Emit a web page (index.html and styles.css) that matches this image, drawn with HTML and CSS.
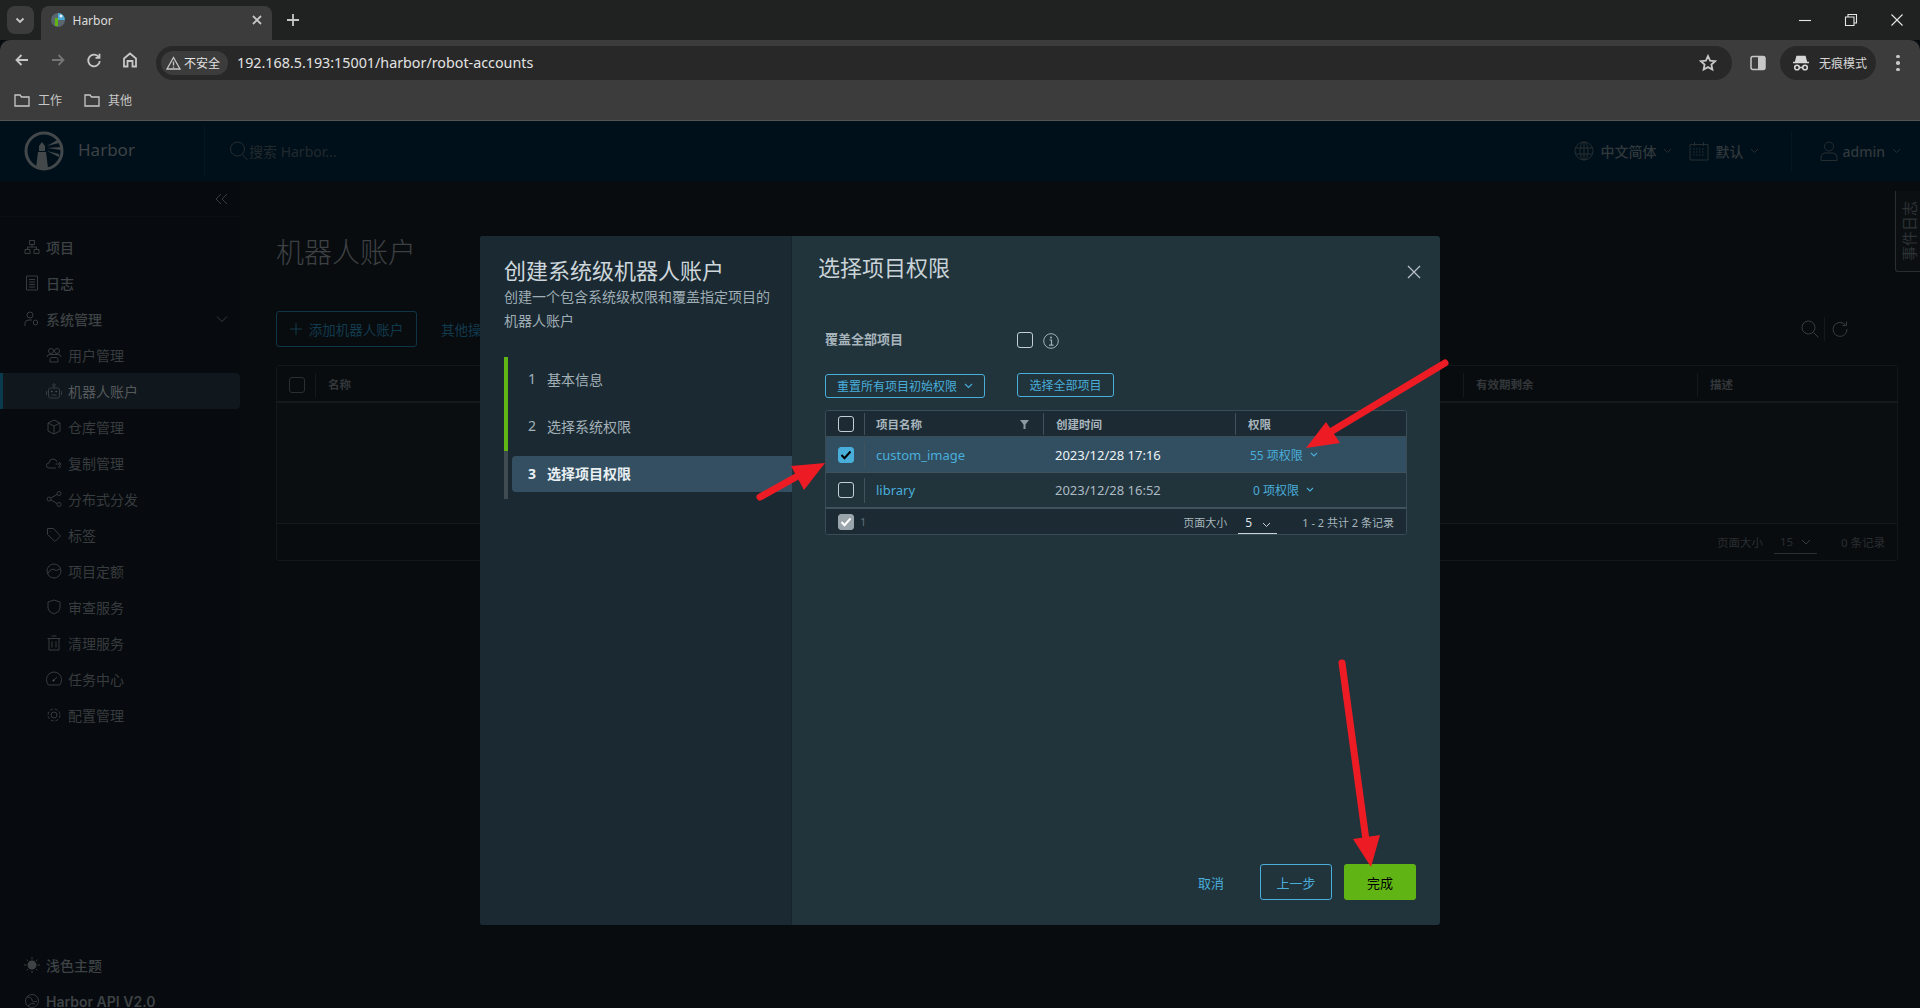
FILE: index.html
```html
<!DOCTYPE html>
<html lang="zh-CN">
<head>
    <meta charset="UTF-8">
    <title>Harbor</title>
    <link rel="stylesheet" href="styles.css">
</head>
<body>
<div class="page">

    <!-- browser chrome -->
    <div class="tabstrip">
        <div class="tab-list"><svg width="12" height="12" viewBox="0 0 12 12"><path d="M2.5 4.5 6 8l3.5-3.5" class="ico-light2"/></svg></div>
        <div class="tab">
            <svg width="16" height="16" viewBox="0 0 16 16"><circle cx="8" cy="8" r="7" fill="#59666d"/><path d="M8 1a7 7 0 0 1 7 7H8z" fill="#4aa9d8"/><rect x="5" y="6" width="3" height="8" fill="#60b515"/><circle cx="11" cy="4" r="1.500" fill="#e8eef2"/></svg>
            <span class="tab-title">Harbor</span>
            <svg class="tab-close" width="12" height="12" viewBox="0 0 12 12"><path d="M2 2l8 8M10 2l-8 8" class="ico-light2"/></svg>
        </div>
        <svg class="tab-new" width="14" height="14" viewBox="0 0 14 14"><path d="M7 1v12M1 7h12" class="ico-light2"/></svg>
        <div class="win-controls">
            <svg width="14" height="14" viewBox="0 0 14 14"><path d="M1 7.500h12" class="ico-thin"/></svg>
            <svg width="14" height="14" viewBox="0 0 14 14"><path d="M1.500 4h8.500v8.500H1.500zM4 4V1.500h8.500V10H10" class="ico-thin"/></svg>
            <svg width="14" height="14" viewBox="0 0 14 14"><path d="M1.500 1.500l11 11M12.500 1.500l-11 11" class="ico-thin"/></svg>
        </div>
    </div>
    <div class="toolbar">
        <div class="nav-btns">
            <svg width="16" height="16" viewBox="0 0 16 16"><path d="M14 8H2.500M7.500 3l-5 5 5 5" class="ico-light2"/></svg>
            <svg width="16" height="16" viewBox="0 0 16 16"><path d="M2 8h11.500M8.500 3l5 5-5 5" class="ico-dim"/></svg>
            <svg width="16" height="16" viewBox="0 0 16 16"><path d="M13 5.500A5.800 5.800 0 1 0 13.800 9M13.500 1.800v4h-4" class="ico-light2"/></svg>
            <svg width="16" height="16" viewBox="0 0 16 16"><path d="M2 14.500V6.500L8 1.500l6 5v8h-3.500V9h-5v5.500z" class="ico-light2"/></svg>
        </div>
        <div class="omnibox">
            <div class="chip">
                <svg width="15" height="14" viewBox="0 0 15 14"><path d="M7.500 1.500 14 13H1zM7.500 5.500v4M7.500 10.500v1.200" class="ico-light"/></svg>
                <span>不安全</span>
            </div>
            <span class="url">192.168.5.193:15001/harbor/robot-accounts</span>
            <svg class="star" width="18" height="18" viewBox="0 0 18 18"><path d="M9 2l2.100 4.600 5 .6-3.700 3.400 1 5L9 13.100l-4.400 2.500 1-5L1.900 7.200l5-.6z" class="ico-light2"/></svg>
        </div>
        <svg class="panel-ico" width="16" height="16" viewBox="0 0 16 16"><rect x="1" y="1.500" width="14" height="13" rx="2" fill="none" stroke="#c7c7c7" stroke-width="1.500"/><rect x="8" y="1.500" width="7" height="13" rx="1" fill="#c7c7c7"/></svg>
        <div class="incognito">
            <svg width="18" height="16" viewBox="0 0 18 16"><path d="M5 1.500h8l1.300 5H3.700zM1 7.500h16" fill="#d6d6d6" stroke="#d6d6d6" stroke-width="1.500"/><circle cx="5" cy="12.500" r="2.300" fill="none" stroke="#d6d6d6" stroke-width="1.600"/><circle cx="13" cy="12.500" r="2.300" fill="none" stroke="#d6d6d6" stroke-width="1.600"/><path d="M7.300 12.500h3.400" stroke="#d6d6d6" stroke-width="1.500"/></svg>
            <span>无痕模式</span>
        </div>
        <div class="menu-dots"><i></i><i></i><i></i></div>
    </div>
    <div class="bookmarks">
        <div class="bookmark"><svg width="16" height="14" viewBox="0 0 16 14"><path d="M1 2h5l1.500 2H15v9H1z" class="ico-light"/></svg><span>工作</span></div>
        <div class="bookmark"><svg width="16" height="14" viewBox="0 0 16 14"><path d="M1 2h5l1.500 2H15v9H1z" class="ico-light"/></svg><span>其他</span></div>
    </div>

    <!-- harbor header, dimmed by the modal backdrop -->
    <header class="app-header">
        <div class="brand">
            <svg width="40" height="40" viewBox="0 0 40 40"><circle cx="20" cy="20" r="18" fill="none" stroke="#43484b" stroke-width="3"/><path d="M15 15l3-4 3 4v5h-6zM14 21h8l2 16h-12z" fill="#43484b"/><path d="M23 15l12-7v4zM23 17l14-1v3zM23 20l12 3v3z" fill="#43484b"/></svg>
            <span class="brand-name">Harbor</span>
        </div>
        <div class="header-search">
            <svg width="20" height="22" viewBox="0 0 20 22"><circle cx="8.500" cy="9" r="7" class="ico-h"/><path d="M13.500 14.500l5 5.500" class="ico-h"/></svg>
            <span>搜索 Harbor...</span>
        </div>
        <div class="header-right">
            <svg width="20" height="20" viewBox="0 0 20 20"><circle cx="10" cy="10" r="9" class="ico-h"/><ellipse cx="10" cy="10" rx="4" ry="9" class="ico-h"/><path d="M1 7h18M1 13h18M10 1v18" class="ico-h"/></svg>
            <span class="h-label lang">中文简体</span>
            <svg class="h-chev" width="9" height="6" viewBox="0 0 9 6"><path d="M1 1l3.500 3.500L8 1" class="ico-h"/></svg>
            <svg class="h-cal" width="20" height="20" viewBox="0 0 20 20"><path d="M1 3.500h18v15.500H1zM5.500 1v4M14.500 1v4" class="ico-h"/><path d="M4 8h12M4 11h12M4 14h12" class="ico-h" stroke-dasharray="1.500 1.500"/></svg>
            <span class="h-label">默认</span>
            <svg class="h-chev" width="9" height="6" viewBox="0 0 9 6"><path d="M1 1l3.500 3.500L8 1" class="ico-h"/></svg>
            <div class="h-divider"></div>
            <svg class="h-user" width="18" height="20" viewBox="0 0 18 20"><circle cx="9" cy="5.500" r="4.500" class="ico-h"/><path d="M1 19.500v-3.500q0-3.500 4-4h8q4 .5 4 4v3.500z" class="ico-h"/></svg>
            <span class="h-label">admin</span>
            <svg class="h-chev" width="9" height="6" viewBox="0 0 9 6"><path d="M1 1l3.500 3.500L8 1" class="ico-h"/></svg>
        </div>
    </header>

    <div class="app-body">
        <nav class="sidebar">
            <div class="collapse"><svg width="13" height="12" viewBox="0 0 13 12"><path d="M6 1L1 6l5 5M12 1L7 6l5 5" class="ico-s"/></svg></div>
            <div class="nav-list">
                <a class="nav-top"><svg width="16" height="16" viewBox="0 0 16 16"><path d="M5.500 1.500h5v4h-5zM1 10.500h5v4H1zM10 10.500h5v4h-5zM8 5.500v2.500M3.500 10.500V8h9v2.500" class="ico-s"/></svg>项目</a>
                <a class="nav-top"><svg width="16" height="16" viewBox="0 0 16 16"><path d="M2.500 1h11v14h-11zM5 4.500h6M5 7h6M5 9.500h6M5 12h6" class="ico-s"/></svg>日志</a>
                <a class="nav-top"><svg width="16" height="16" viewBox="0 0 16 16"><circle cx="6" cy="4" r="3" class="ico-s"/><path d="M1 15v-3q0-3 4-3h3M11.500 9l2 1v3l-2 1-2-1v-3z" class="ico-s"/></svg>系统管理<svg class="nav-chev" width="12" height="8" viewBox="0 0 12 8"><path d="M1 1.500l5 5 5-5" class="ico-s"/></svg></a>
                <a class="nav-sub"><svg width="16" height="16" viewBox="0 0 16 16"><circle cx="5" cy="4" r="2.500" class="ico-s"/><circle cx="11" cy="4" r="2.500" class="ico-s"/><path d="M1 10q0-2.500 3-2.500h8q3 0 3 2.500M4 15v-2.500q0-2 2-2h4q2 0 2 2V15z" class="ico-s"/></svg>用户管理</a>
                <a class="nav-sub active"><svg width="16" height="16" viewBox="0 0 16 16"><rect x="2.500" y="5" width="11" height="10" rx="2" class="ico-s"/><circle cx="8" cy="2" r="1.200" class="ico-s"/><path d="M8 3v2M5.500 12h5M0.500 8v4M15.500 8v4" class="ico-s"/><circle cx="5.800" cy="8.500" r=".8" fill="#55595c"/><circle cx="10.200" cy="8.500" r=".8" fill="#55595c"/></svg>机器人账户</a>
                <a class="nav-sub"><svg width="16" height="16" viewBox="0 0 16 16"><path d="M8 1l6 3v8l-6 3-6-3V4zM2 4l6 3 6-3M8 7v8" class="ico-s"/></svg>仓库管理</a>
                <a class="nav-sub"><svg width="16" height="16" viewBox="0 0 16 16"><path d="M10 13H3q-2.500 0-2.500-2.500Q.5 8 3 8q.5-4 4-4 3 0 4 3M9.500 9H15M13 7l2 2-2 2M15 12h-3" class="ico-s"/></svg>复制管理</a>
                <a class="nav-sub"><svg width="16" height="16" viewBox="0 0 16 16"><circle cx="3" cy="8" r="2" class="ico-s"/><circle cx="13" cy="2.500" r="2" class="ico-s"/><circle cx="13" cy="13.500" r="2" class="ico-s"/><path d="M5 7l6-3.500M5 9l6 3.500" class="ico-s"/></svg>分布式分发</a>
                <a class="nav-sub"><svg width="16" height="16" viewBox="0 0 16 16"><path d="M1.500 1.500h6l7 7.500-5.500 5.500-7.500-7zM4.500 4.500h.5" class="ico-s"/></svg>标签</a>
                <a class="nav-sub"><svg width="16" height="16" viewBox="0 0 16 16"><circle cx="8" cy="8" r="7" class="ico-s"/><path d="M1.500 11Q4 5.500 8 6q1 3 6.500-.5" class="ico-s"/></svg>项目定额</a>
                <a class="nav-sub"><svg width="16" height="16" viewBox="0 0 16 16"><path d="M8 1l6 2v6q0 4-6 6-6-2-6-6V3z" class="ico-s"/></svg>审查服务</a>
                <a class="nav-sub"><svg width="16" height="16" viewBox="0 0 16 16"><path d="M1.500 3.500h13M3 3.500V15h10V3.500M5.500 1h5M6 6.500v6M10 6.500v6" class="ico-s"/></svg>清理服务</a>
                <a class="nav-sub"><svg width="16" height="16" viewBox="0 0 16 16"><path d="M2.500 14Q.5 12 .5 8.500a7.500 7.500 0 0 1 15 0q0 3.500-2 5.500zM8 9l3-3" class="ico-s"/><circle cx="7.500" cy="9.500" r="1" fill="#55595c"/></svg>任务中心</a>
                <a class="nav-sub"><svg width="16" height="16" viewBox="0 0 16 16"><circle cx="8" cy="8" r="3" class="ico-s"/><circle cx="8" cy="8" r="6" class="ico-s" stroke-dasharray="3 1.700"/></svg>配置管理</a>
            </div>
            <div class="nav-bottom">
                <a class="nav-top"><svg width="16" height="16" viewBox="0 0 16 16"><circle cx="8" cy="8" r="4.500" fill="#3d4245"/><path d="M8 0v2.500M8 13.500V16M0 8h2.500M13.500 8H16M2.500 2.500l1.500 1.500M12 12l1.500 1.500M13.500 2.500L12 4M4 12l-1.500 1.500" class="ico-s"/></svg>浅色主题</a>
                <a class="nav-top api"><svg width="16" height="16" viewBox="0 0 16 16"><circle cx="8" cy="8" r="6.500" class="ico-s"/><path d="M3 4q5 0 5 3t5 1M4 13q3-4 7-2" class="ico-s"/></svg>Harbor API V2.0</a>
            </div>
        </nav>

        <main class="content">
            <h1 class="page-title">机器人账户</h1>
            <div class="page-actions">
                <button class="add-btn"><svg width="12" height="12" viewBox="0 0 12 12"><path d="M6 0v12M0 6h12" stroke="#123a4d" stroke-width="1" fill="none"/></svg>添加机器人账户</button>
                <span class="more-btn">其他操作</span>
                <div class="page-tools">
                    <svg width="18" height="18" viewBox="0 0 18 18"><circle cx="7.500" cy="7.500" r="6.500" class="ico-s"/><path d="M12.500 12.500l5 5" class="ico-s"/></svg>
                    <div class="tool-line"></div>
                    <svg width="16" height="16" viewBox="0 0 16 16"><path d="M13 3.500A7 7 0 1 0 15 8M14.500 .5v4h-4" class="ico-s"/></svg>
                </div>
            </div>
            <div class="bg-table">
                <div class="bg-head">
                    <span class="bg-check"></span>
                    <span class="bg-col first">名称</span>
                    <span class="bg-col expiry">有效期剩余</span>
                    <span class="bg-col desc">描述</span>
                </div>
                <div class="bg-rows"></div>
                <div class="bg-foot">
                    <span>页面大小</span>
                    <span class="bg-size">15<svg width="10" height="6" viewBox="0 0 10 6"><path d="M1 1l4 4 4-4" class="ico-s"/></svg></span>
                    <span>0 条记录</span>
                </div>
            </div>
        </main>
    </div>

    <div class="events-tab"><span>事件日志</span></div>

    <!-- modal -->
    <section class="modal">
        <aside class="wizard">
            <h2>创建系统级机器人账户</h2>
            <p>创建一个包含系统级权限和覆盖指定项目的机器人账户</p>
            <ul class="steps">
                <li class="done"><b>1</b>基本信息</li>
                <li class="done"><b>2</b>选择系统权限</li>
                <li class="current"><b>3</b>选择项目权限</li>
            </ul>
        </aside>
        <div class="pane">
            <div class="pane-head">
                <h3>选择项目权限</h3>
                <svg width="14" height="14" viewBox="0 0 14 14"><path d="M1 1l12 12M13 1L1 13" stroke="#b4c0c6" stroke-width="1.300" fill="none"/></svg>
            </div>
            <div class="pane-body">
                <div class="cover-row">
                    <label>覆盖全部项目</label>
                    <span class="check"></span>
                    <svg class="info" width="16" height="16" viewBox="0 0 16 16"><circle cx="8" cy="8" r="7.300" fill="none" stroke="#9fb0b9" stroke-width="1"/><path d="M6.500 7h2v5M6 12.200h4.500" fill="none" stroke="#9fb0b9" stroke-width="1.200"/><circle cx="8" cy="4.500" r="1" fill="#9fb0b9"/></svg>
                </div>
                <div class="action-row">
                    <button class="btn-outline reset">重置所有项目初始权限<svg width="9" height="6" viewBox="0 0 9 6"><path d="M1 1l3.500 3.500L8 1" class="ico-b"/></svg></button>
                    <button class="btn-outline all">选择全部项目</button>
                </div>
                <div class="grid">
                    <div class="row head">
                        <div class="c-check"><span class="check"></span></div>
                        <div class="c-name">项目名称<svg width="9" height="9" viewBox="0 0 9 9"><path d="M0 0h9L5.500 4.500V9h-2V4.500z" fill="#8a9aa3"/></svg></div>
                        <div class="c-date">创建时间</div>
                        <div class="c-perm">权限</div>
                    </div>
                    <div class="row selected">
                        <div class="c-check"><span class="check on"><svg width="12" height="10" viewBox="0 0 12 10"><path d="M1.500 5l3 3.200L10.500 1.500" fill="none" stroke="#000" stroke-width="2"/></svg></span></div>
                        <div class="c-name link">custom_image</div>
                        <div class="c-date">2023/12/28 17:16</div>
                        <div class="c-perm link">55 项权限<svg width="8" height="6" viewBox="0 0 8 6"><path d="M1 1l3 3 3-3" class="ico-b"/></svg></div>
                    </div>
                    <div class="row plain">
                        <div class="c-check"><span class="check"></span></div>
                        <div class="c-name link">library</div>
                        <div class="c-date">2023/12/28 16:52</div>
                        <div class="c-perm link zero">0 项权限<svg width="8" height="6" viewBox="0 0 8 6"><path d="M1 1l3 3 3-3" class="ico-b"/></svg></div>
                    </div>
                    <div class="grid-foot">
                        <span class="check gray"><svg width="12" height="10" viewBox="0 0 12 10"><path d="M1.500 5l3 3.200L10.500 1.500" fill="none" stroke="#fff" stroke-width="2"/></svg></span>
                        <span class="count">1</span>
                        <span class="psize-label">页面大小</span>
                        <span class="psize">5<svg width="9" height="6" viewBox="0 0 9 6"><path d="M1 1l3.500 3.500L8 1" fill="none" stroke="#c8d2d8" stroke-width="1"/></svg></span>
                        <span class="total">1 - 2 共计 2 条记录</span>
                    </div>
                </div>
            </div>
            <div class="pane-foot">
                <span class="cancel">取消</span>
                <button class="btn-outline prev">上一步</button>
                <button class="btn-finish">完成</button>
            </div>
        </div>
    </section>

    <!-- red annotation arrows -->
    <svg class="arrows" width="1920" height="1008" viewBox="0 0 1920 1008">
        <path d="M1445 363 1322 437" stroke="#ed1c24" stroke-width="7" stroke-linecap="round"/>
        <path d="M1306 448 1326 422 1340 443z" fill="#ed1c24"/>
        <path d="M760 497 796 477" stroke="#ed1c24" stroke-width="7" stroke-linecap="round"/>
        <path d="M825 463 791 466 804 490z" fill="#ed1c24"/>
        <path d="M1342 663 1366 840" stroke="#ed1c24" stroke-width="7" stroke-linecap="round"/>
        <path d="M1371 867 1353 839 1380 835z" fill="#ed1c24"/>
    </svg>
</div>
</body>
</html>
```

FILE: styles.css
```css
* {
    box-sizing: border-box;
}

html, body {
    margin: 0;
    height: 100%;
    overflow: hidden;
    background: #080c0f;
}

body {
    font-family: "Noto Sans", "Noto Sans CJK SC", sans-serif;
    font-size: 14px;
}

svg {
    display: block;
    flex: none;
}

h1, h2, h3, p, ul {
    margin: 0;
    padding: 0;
    font-weight: 400;
}

button {
    font-family: inherit;
    background: none;
    padding: 0;
}

.page {
    position: relative;
    width: 1920px;
    height: 1008px;
    overflow: hidden;
    display: flex;
    flex-direction: column;
}

/* icon strokes */
.ico-light, .ico-light2, .ico-thin, .ico-dim, .ico-h, .ico-s, .ico-b {
    fill: none;
}
.ico-light { stroke: #c7c7c7; stroke-width: 1.300; }
.ico-light2 { stroke: #c7c7c7; stroke-width: 1.800; }
.ico-thin { stroke: #e6e6e6; stroke-width: 1.100; }
.ico-dim { stroke: #757575; stroke-width: 1.800; }
.ico-h { stroke: #262d31; stroke-width: 1; }
.ico-s { stroke: #373c3f; stroke-width: 1; }
.ico-b { stroke: #49aeda; stroke-width: 1.100; }

/* browser chrome */
.tabstrip {
    height: 40px;
    background: #202221;
    display: flex;
    align-items: flex-start;
    position: relative;
}

.tab-list {
    width: 27px;
    height: 28px;
    margin: 6px 0 0 6.500px;
    background: #3c3c3c;
    border-radius: 8px;
    display: flex;
    align-items: center;
    justify-content: center;
}

.tab {
    width: 231px;
    height: 34px;
    margin: 6px 0 0 7px;
    padding: 0 9px 6px;
    background: #3c3c3c;
    border-radius: 8px 8px 0 0;
    display: flex;
    align-items: center;
    color: #dcdcdc;
    font-size: 12px;
}

.tab-title {
    margin-left: 7px;
    flex: 1;
}

.tab-new {
    margin: 13px 0 0 14px;
}

.win-controls {
    margin-left: auto;
    display: flex;
    gap: 32px;
    padding: 13px 16px 0 0;
}

.toolbar {
    height: 40px;
    background: #3c3c3c;
    border-radius: 10px 10px 0 0;
    display: flex;
    align-items: center;
    padding: 0 0 0 14px;
}

.nav-btns {
    display: flex;
    gap: 20px;
    width: 142px;
}

.omnibox {
    width: 1576px;
    height: 34px;
    background: #282828;
    border-radius: 17px;
    display: flex;
    align-items: center;
    padding: 0 15px 0 5px;
    margin-top: 6px;
}

.chip {
    width: 67px;
    height: 24px;
    background: #3c3c3c;
    border-radius: 12px;
    display: flex;
    align-items: center;
    gap: 3px;
    padding-left: 5px;
    color: #e3e3e3;
    font-size: 12px;
}

.url {
    margin-left: 9px;
    padding-bottom: 2px;
    color: #e3e3e3;
    font-size: 14.300px;
    flex: 1;
}

.panel-ico {
    margin: 6px 0 0 18px;
}

.incognito {
    width: 96px;
    height: 34px;
    margin: 6px 0 0 14px;
    background: #282828;
    border-radius: 17px;
    display: flex;
    align-items: center;
    gap: 9px;
    padding-left: 12px;
    color: #d6d6d6;
    font-size: 12px;
}

.menu-dots {
    margin: 6px 0 0 20px;
    display: flex;
    flex-direction: column;
    gap: 3px;
}

.menu-dots i {
    width: 3.500px;
    height: 3.500px;
    background: #c7c7c7;
    border-radius: 50%;
}

.bookmarks {
    height: 41px;
    background: #3c3c3c;
    border-bottom: 1px solid #545454;
    display: flex;
    align-items: center;
    padding-left: 14px;
    gap: 22px;
    color: #c7c7c7;
    font-size: 12px;
}

.bookmark {
    display: flex;
    align-items: center;
    gap: 8px;
}

/* harbor header */
.app-header {
    height: 60px;
    background: #00101a;
    display: flex;
    align-items: center;
    color: #2c3337;
}

.brand {
    width: 205px;
    height: 50px;
    padding-left: 24px;
    display: flex;
    align-items: center;
    gap: 14px;
    border-right: 1px solid #08171f;
}

.brand-name {
    color: #3d4246;
    font-size: 17px;
    padding-bottom: 3px;
}

.header-search {
    margin-left: 24px;
    display: flex;
    align-items: center;
    color: #22292d;
    font-size: 14px;
}

.header-right {
    margin-left: auto;
    display: flex;
    align-items: center;
    padding-right: 19px;
}

.h-label {
    margin-left: 6px;
    font-weight: 500;
    color: #31383c;
}

.h-chev {
    margin-left: 7px;
}

.h-cal {
    margin-left: 17px;
}

.h-divider {
    width: 1px;
    height: 40px;
    background: #08171f;
    margin: 0 28px 0 32px;
}

.h-user {
    margin-right: -2px;
}

/* background page */
.app-body {
    flex: 1;
    display: flex;
    min-height: 0;
}

.sidebar {
    width: 240px;
    background: #070a0e;
    display: flex;
    flex-direction: column;
    color: #373c3f;
}

.collapse {
    height: 36px;
    border-bottom: 1px solid #0b0f13;
    display: flex;
    justify-content: flex-end;
    align-items: center;
    padding-right: 12px;
}

.nav-list {
    padding-top: 12px;
    flex: 1;
}

.nav-top, .nav-sub {
    height: 36px;
    display: flex;
    align-items: center;
    position: relative;
}

.nav-top {
    padding-left: 24px;
    gap: 6px;
    font-weight: 500;
    color: #3d4245;
}

.nav-sub {
    padding-left: 46px;
    gap: 6px;
}

.nav-sub.active {
    background: #10171d;
    border-left: 3px solid #0a3a4d;
    padding-left: 43px;
    border-radius: 0 4px 4px 0;
    color: #55595c;
}

.nav-chev {
    position: absolute;
    right: 12px;
    top: 14px;
}

.nav-bottom {
    flex: none;
    height: 72px;
    margin-bottom: -13px;
    transform: translateY(-2px);
}

.nav-top.api {
    font-family: Inter, "Noto Sans CJK SC", sans-serif;
    font-weight: 600;
    white-space: nowrap;
}

.content {
    flex: 1;
    padding: 0 22px 0 36px;
    background: #080c0f;
    min-width: 0;
}

.page-title {
    font-size: 28px;
    color: #3e4144;
    font-weight: 300;
    line-height: 40px;
    margin-top: 51px;
}

.page-actions {
    display: flex;
    align-items: center;
    margin-top: 39px;
    position: relative;
}

.add-btn {
    width: 141px;
    height: 36px;
    border: 1px solid #0f3547;
    border-radius: 3px;
    color: #123a4d;
    font-size: 13.500px;
    display: flex;
    align-items: center;
    justify-content: center;
    gap: 7px;
}

.more-btn {
    margin-left: 24px;
    color: #123a4d;
    font-size: 13.500px;
}

.page-tools {
    margin-left: auto;
    margin-right: 50px;
    display: flex;
    align-items: center;
    gap: 7px;
}

.page-tools svg:first-child {
    margin-right: -2px;
}

.tool-line {
    width: 1px;
    height: 24px;
    background: #14191c;
}

.bg-table {
    margin-top: 18px;
    height: 196px;
    border: 1px solid #12171b;
    border-radius: 3px;
    display: flex;
    flex-direction: column;
    background: #0a0e11;
}

.bg-head {
    height: 37px;
    border-bottom: 2px solid #14191c;
    position: relative;
    display: flex;
    align-items: center;
    background: #080c0f;
    color: #33373a;
    font-size: 11.500px;
    font-weight: 700;
}

.bg-check {
    position: absolute;
    left: 12px;
    top: 11px;
    width: 16px;
    height: 16px;
    border: 1px solid #2b2f32;
    border-radius: 3px;
}

.bg-col {
    position: absolute;
    top: 7px;
    height: 24px;
    line-height: 24px;
    padding-left: 12px;
    border-left: 1px solid #14191c;
}

.bg-col.first { left: 38px; }
.bg-col.expiry { left: 1186px; }
.bg-col.desc { left: 1420px; }

.bg-rows {
    flex: 1;
}

.bg-foot {
    height: 37px;
    border-top: 1px solid #14191c;
    background: #080c0f;
    display: flex;
    align-items: center;
    justify-content: flex-end;
    padding-right: 12px;
    color: #2a2e31;
    font-size: 11.500px;
}

.bg-size {
    width: 43px;
    margin: 0 24px 0 11px;
    height: 24px;
    border-bottom: 1px solid #2a2e31;
    display: flex;
    align-items: center;
    justify-content: space-between;
    padding: 0 6px;
}

.events-tab {
    position: absolute;
    left: 1895px;
    top: 191px;
    width: 25px;
    height: 81px;
    border-left: 1px solid #2a2e31;
    border-bottom: 1px solid #2a2e31;
    background: #0b0f12;
    border-radius: 0 0 0 3px;
    color: #2d3235;
    font-size: 15px;
    display: flex;
    align-items: center;
    justify-content: center;
}

.events-tab span {
    writing-mode: vertical-rl;
    text-orientation: sideways;
    transform: rotate(180deg);
}

/* modal */
.modal {
    position: absolute;
    left: 480px;
    top: 236px;
    width: 960px;
    height: 689px;
    display: flex;
    border-radius: 3px;
    overflow: hidden;
    background: #21333b;
    color: #adbbc4;
}

.wizard {
    width: 312px;
    background: #1b2a32;
    border-right: 1px solid #17242b;
    padding: 19px 0 0 24px;
}

.wizard h2 {
    font-size: 22px;
    line-height: 30px;
    color: #cdd6db;
}

.wizard p {
    font-size: 14px;
    line-height: 24px;
    width: 274px;
    color: #9fadb5;
}

.steps {
    list-style: none;
    margin-top: 24px;
    width: 288px;
}

.steps li {
    height: 47px;
    display: flex;
    align-items: center;
    border-left: 4px solid #60b515;
    padding: 0 0 4px 20px;
    color: #a3b1b9;
    font-size: 14px;
}

.steps li b {
    width: 19px;
    font-weight: 400;
}

.steps li.current {
    height: 48px;
    border-left-color: #3f4b50;
    color: #eaf0f3;
    font-weight: 700;
    position: relative;
    z-index: 0;
}

.steps li.current b {
    font-weight: 700;
}

.steps li.current::before {
    content: "";
    position: absolute;
    left: 4px;
    right: 0;
    top: 5px;
    height: 36px;
    background: #334f61;
    border-radius: 4px 0 0 4px;
    z-index: -1;
}

.pane {
    flex: 1;
    display: flex;
    flex-direction: column;
    padding: 15px 0 25px 26px;
}

.pane-head {
    display: flex;
    justify-content: space-between;
    align-items: flex-start;
    padding-right: 19px;
}

.pane-head h3 {
    font-size: 22px;
    line-height: 32px;
    color: #c9d3d8;
}

.pane-head svg {
    margin-top: 14px;
}

.pane-body {
    padding-left: 7px;
    margin-top: 49px;
}

.cover-row {
    display: flex;
    align-items: center;
    height: 16px;
}

.cover-row label {
    width: 192px;
    font-size: 13px;
    font-weight: 700;
    position: relative;
    top: -2px;
    color: #a8b5bd;
}

.info {
    margin-left: 10px;
    position: relative;
    top: 1px;
}

.check {
    width: 16px;
    height: 16px;
    flex: none;
    display: inline-flex;
    align-items: center;
    justify-content: center;
    border: 1px solid #c4cfd5;
    border-radius: 3px;
}

.check.on {
    background: #49aeda;
    border-color: #49aeda;
}

.check.gray {
    background: #9aa5ab;
    border-color: #9aa5ab;
}

.action-row {
    display: flex;
    align-items: flex-start;
    margin-top: 25px;
}

.btn-outline {
    border: 1px solid #49aeda;
    border-radius: 3px;
    color: #49aeda;
}

.reset {
    width: 160px;
    height: 24px;
    margin-top: 1px;
    font-size: 12px;
    display: flex;
    align-items: center;
    justify-content: center;
    gap: 7px;
}

.all {
    width: 97px;
    height: 24px;
    margin-left: 32px;
    font-size: 12px;
}

.grid {
    width: 582px;
    height: 125px;
    margin-top: 12px;
    border: 1px solid #3a4d57;
    border-radius: 3px;
    display: flex;
    flex-direction: column;
    overflow: hidden;
}

.row {
    display: grid;
    grid-template-columns: 38px 179px 192px 1fr;
    align-items: center;
}

.row > div {
    height: 25px;
    display: flex;
    align-items: center;
    border-left: 1px solid #40525c;
    padding-left: 12px;
}

.row > .c-check {
    border-left: none;
}

.row > .c-name {
    padding-left: 11px;
}

.row.head {
    height: 26px;
    background: #1b2a33;
    border-bottom: 1px solid #3a4d57;
    font-size: 11.500px;
    font-weight: 700;
    color: #a8b5bd;
}

.row.head > div {
    height: 22px;
}

.c-name svg {
    margin: 2px 14px 0 auto;
}

.row.selected {
    height: 36px;
    background: #324f62;
    border-bottom: 1px solid #40525c;
    font-size: 13px;
}

.row.plain {
    height: 36px;
    font-size: 13px;
    border-bottom: 2px solid #40525c;
}

.row.selected .c-date {
    color: #eef3f6;
}

.row.selected .c-date,
.row.plain .c-date,
.row.selected .c-perm,
.row.plain .c-perm {
    border-left: none;
}

.link {
    color: #49aeda;
}

.row.selected .c-perm,
.row.plain .c-perm {
    font-size: 12px;
    padding-left: 15px;
    gap: 7px;
}

.row.plain .c-perm.zero {
    padding-left: 18px;
}

.grid-foot {
    flex: 1;
    background: #1b2a33;
    display: flex;
    align-items: center;
    padding-left: 12px;
    font-size: 11px;
    color: #a8b5bd;
}

.count {
    margin-left: 6px;
    color: #5e6e77;
}

.psize-label {
    margin-left: auto;
}

.psize {
    width: 39px;
    height: 23px;
    align-self: flex-end;
    margin-left: 11px;
    border-bottom: 1px solid #c8d2d8;
    display: flex;
    align-items: center;
    justify-content: space-between;
    padding: 0 6px 0 7px;
    font-size: 12px;
    color: #dfe6ea;
}

.psize svg {
    margin-top: 5px;
}

.total {
    margin: 0 12px 0 25px;
}

.pane-foot {
    margin-top: auto;
    display: flex;
    align-items: center;
    justify-content: flex-end;
    padding-right: 24px;
    font-size: 13px;
}

.cancel {
    color: #49aeda;
    margin-right: 36px;
}

.prev {
    width: 72px;
    height: 36px;
    font-size: 13px;
}

.btn-finish {
    width: 72px;
    height: 36px;
    margin-left: 12px;
    background: #60b515;
    border: none;
    border-radius: 3px;
    color: #000;
    font-size: 13px;
}

.arrows {
    position: absolute;
    left: 0;
    top: 0;
    pointer-events: none;
}
```
